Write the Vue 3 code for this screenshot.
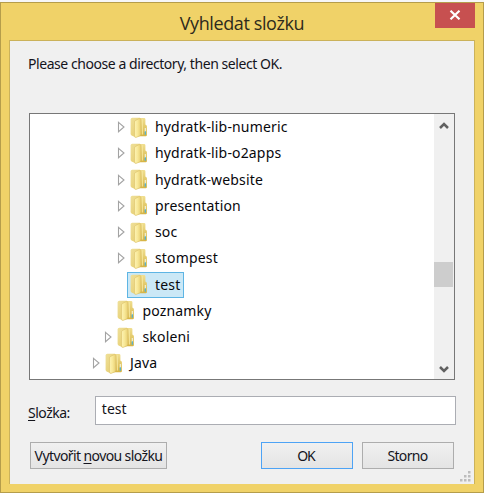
<script setup>
const rows = [
  { name: 'hydratk-lib-numeric', depth: 2, arrow: true },
  { name: 'hydratk-lib-o2apps', depth: 2, arrow: true },
  { name: 'hydratk-website', depth: 2, arrow: true },
  { name: 'presentation', depth: 2, arrow: true },
  { name: 'soc', depth: 2, arrow: true },
  { name: 'stompest', depth: 2, arrow: true },
  { name: 'test', depth: 2, arrow: false, selected: true },
  { name: 'poznamky', depth: 1, arrow: false },
  { name: 'skoleni', depth: 1, arrow: true },
  { name: 'Java', depth: 0, arrow: true }
]
</script>

<template>
  <div class="screen">
    <svg class="defs" width="0" height="0" aria-hidden="true">
      <defs>
        <linearGradient id="cover" x1="0" y1="0" x2="1" y2="0">
          <stop offset="0" stop-color="#fdf3b4" />
          <stop offset=".5" stop-color="#f8e897" />
          <stop offset="1" stop-color="#e8cf72" />
        </linearGradient>
        <linearGradient id="edge" x1="0" y1="0" x2="1" y2="1">
          <stop offset="0" stop-color="#efe09a" />
          <stop offset="1" stop-color="#e5cb69" />
        </linearGradient>
        <linearGradient id="back" x1="0" y1="0" x2="0" y2="1">
          <stop offset="0" stop-color="#f0df91" />
          <stop offset="1" stop-color="#d6b444" />
        </linearGradient>
      </defs>
    </svg>
    <div class="window">
      <header class="titlebar">
        <h1 class="title">Vyhledat složku</h1>
        <button class="close" aria-label="Zavřít">
          <svg width="12" height="10" viewBox="0 0 12 10"><path d="M1.5 .7 L10.5 9.3 M10.5 .7 L1.5 9.3" stroke="#fff" stroke-width="2.1" /></svg>
        </button>
      </header>
      <main class="client">
        <p class="prompt">Please choose a directory, then select OK.</p>
        <div class="tree">
          <ul class="rows">
            <li v-for="r in rows" :key="r.name" class="row" :class="'depth-' + r.depth">
              <span class="toggle">
                <svg v-if="r.arrow" width="8" height="12" viewBox="0 0 8 12"><path d="M1.5 1.3 L7 6 L1.5 10.7 Z" fill="#fff" stroke="#a3a3a3" stroke-width="1.1" /></svg>
              </span>
              <span class="item" :class="{ selected: r.selected }">
                <svg class="folder" width="18" height="21" viewBox="0 0 18 21">
                  <path d="M8 2 Q8 1 9 1 H14 Q15.4 1 15.4 2.2 V7.5 L16.9 8.7 V18 Q16.9 19.2 15.7 19.2 H7Z" fill="url(#back)" />
                  <path d="M.6 2.5 Q.6 .8 2.3 .8 H10 V19 L5 20 L2 18.8 Q.6 18.2 .6 16.8Z" fill="url(#edge)" />
                  <path d="M4.5 5 Q4.5 4 5.5 3.5 L9.2 1.6 Q10.8 1 10.8 2.8 V16.8 Q10.8 18.4 9.5 19 L6.2 20.4 Q4.5 20.8 4.5 19Z" fill="url(#cover)" stroke="#dbc169" stroke-width=".6" />
                  <path d="M12.4 2.2 V17.5" stroke="#f5e69c" stroke-width="1" />
                  <path d="M15.3 11 V15" stroke="#f2f4df" stroke-width="1.1" />
                  <path d="M15.3 14.2 V17.8" stroke="#4fb0d4" stroke-width="1.2" />
                </svg>
                <span class="name">{{ r.name }}</span>
              </span>
            </li>
          </ul>
          <div class="scrollbar">
            <svg width="10" height="9" viewBox="0 0 10 9"><path d="M1 7 L5 3 L9 7" fill="none" stroke="#606060" stroke-width="2.5" /></svg>
            <div class="thumb"></div>
            <svg width="10" height="9" viewBox="0 0 10 9"><path d="M1 2 L5 6 L9 2" fill="none" stroke="#606060" stroke-width="2.5" /></svg>
          </div>
        </div>
        <div class="field">
          <label class="label" for="folder"><u>S</u>ložka:</label>
          <div id="folder" class="input"><span>test</span></div>
        </div>
        <footer class="actions">
          <button class="btn create">Vytvořit <u>n</u>ovou složku</button>
          <button class="btn ok">OK</button>
          <button class="btn cancel">Storno</button>
        </footer>
        <svg class="grip" width="11" height="11" viewBox="0 0 11 11" fill="#bcbcbc">
          <path d="M8 0h2.5v2.5H8zM4 4h2.5v2.5H4zM8 4h2.5v2.5H8zM0 8h2.5v2.5H0zM4 8h2.5v2.5H4zM8 8h2.5v2.5H8z" />
        </svg>
      </main>
    </div>
  </div>
</template>

<style>
body { margin: 0; background: #f7f7f7; }
</style>

<style scoped>
* { box-sizing: border-box; }
.screen { width: 484px; height: 493px; padding-top: 2px; background: #f7f7f7; font-family: "Noto Sans", "Open Sans", sans-serif; font-size: 14px; color: #14141c; overflow: hidden; }
.defs { position: absolute; }
.window { height: 491px; border: 1px solid #b59d4b; background: #f0d268; padding: 0 8px 8px; display: flex; flex-direction: column; }
.titlebar { height: 37px; flex: none; display: grid; grid-template-columns: 40px 1fr 40px; align-items: start; }
.title { grid-column: 2; margin: 0; font: 400 18px/24px "Open Sans", sans-serif; padding-top: 8px; text-align: center; letter-spacing: -.4px; color: #2d2a1c; white-space: nowrap; }
.close { height: 25px; border: 0; padding: 0 0 2px; background: #c75050; display: flex; align-items: center; justify-content: center; }
.client { flex: 1; min-height: 0; position: relative; background: #f0f0f0; border: 1px solid #cbb25a; border-bottom: 0; padding: 13px 18px 0; }
.prompt { margin: 0; height: 59px; line-height: 20px; letter-spacing: -.44px; white-space: nowrap; }
.tree { height: 267px; width: 426px; margin-left: 1px; border: 1px solid #777; background: #fff; display: flex; }
.rows { flex: 1; list-style: none; margin: 0; padding: 0; color: #08080c; }
.row { height: 26.25px; display: flex; align-items: center; }
.depth-2 { padding-left: 86.5px; }
.depth-1 { padding-left: 74px; }
.depth-0 { padding-left: 61.5px; }
.toggle { width: 10px; height: 12px; display: flex; }
.item { height: 26px; border: 1px solid transparent; padding: 0 3px 0 2px; display: flex; align-items: center; }
.selected { background: #cbe8f6; border-color: #5eb5e4; }
.folder { flex: none; margin-right: 7.5px; }
.name { line-height: 20px; white-space: nowrap; letter-spacing: .16px; }
.scrollbar { width: 20px; background: #f0f0f0; display: flex; flex-direction: column; align-items: center; padding: 7px 1px 5px 0; }
.thumb { width: 19px; height: 25px; margin: 132px 0 auto; background: #cdcdcd; }
.field { display: flex; margin-top: 16px; }
.label { width: 67px; line-height: 20px; padding-top: 7px; letter-spacing: -.5px; }
.input { width: 362px; height: 29px; border: 1px solid #abadb3; background: #fff; padding: 2px 6px; line-height: 20px; }
u { text-decoration: underline; text-underline-offset: 2px; text-decoration-thickness: 1px; }
.actions { display: flex; margin-top: 17px; padding-left: 2px; }
.btn { height: 27px; padding: 1px 0 0; border: 1px solid #adadad; background: linear-gradient(#f0f0f0, #e4e4e4); font: inherit; line-height: 20px; color: inherit; white-space: nowrap; }
.create { width: 137px; letter-spacing: -.6px; }
.ok { width: 92px; margin-left: 94px; border-color: #4da3f5; letter-spacing: -1px; padding-right: 2px; }
.cancel { width: 92px; margin-left: 9px; letter-spacing: -.65px; padding-right: 1px; }
.grip { position: absolute; right: 3px; bottom: 2px; }
</style>
